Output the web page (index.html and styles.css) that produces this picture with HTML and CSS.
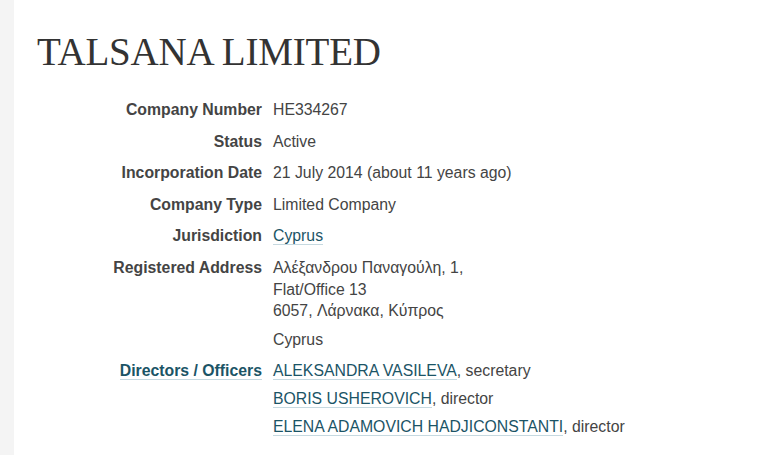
FILE: index.html
```html
<!DOCTYPE html>
<html lang="en">
<head>
<meta charset="utf-8">
<title>TALSANA LIMITED</title>
<link rel="stylesheet" href="styles.css">
</head>
<body>
<div class="page">
  <div class="rail"></div>
  <main class="content">
    <h1 class="title">TALSANA LIMITED</h1>
    <dl class="attrs">
      <dt>Company Number</dt>
      <dd>HE334267</dd>
      <dt>Status</dt>
      <dd>Active</dd>
      <dt>Incorporation Date</dt>
      <dd>21 July 2014 (about 11 years ago)</dd>
      <dt>Company Type</dt>
      <dd>Limited Company</dd>
      <dt>Jurisdiction</dt>
      <dd><a class="link" href="#">Cyprus</a></dd>
      <dt>Registered Address</dt>
      <dd>
        <div class="address">Αλέξανδρου Παναγούλη, 1,<br>Flat/Office 13<br>6057, Λάρνακα, Κύπρος</div>
        <div class="country">Cyprus</div>
      </dd>
      <dt><a class="link" href="#">Directors / Officers</a></dt>
      <dd>
        <ul class="officers">
          <li><a class="link" href="#">ALEKSANDRA VASILEVA</a>, secretary</li>
          <li><a class="link" href="#">BORIS USHEROVICH</a>, director</li>
          <li><a class="link" href="#">ELENA ADAMOVICH HADJICONSTANTI</a>, director</li>
        </ul>
      </dd>
    </dl>
  </main>
</div>
</body>
</html>
```
FILE: styles.css
```css
html, body {
  margin: 0;
  padding: 0;
  background: #ffffff;
}

body {
  font-family: "Liberation Sans", Arial, sans-serif;
  font-size: 15.8px;
  line-height: 21.6px;
  color: #444444;
}

.page {
  display: flex;
  min-height: 100vh;
}

.rail {
  width: 14px;
  flex: none;
  background: #f4f4f4;
}

.content {
  flex: 1;
}

.title {
  margin: 29px 0 0 23px;
  font-family: "Liberation Serif", "Times New Roman", serif;
  font-weight: normal;
  font-size: 39px;
  line-height: 45px;
  letter-spacing: -0.2px;
  color: #333333;
}

.attrs {
  display: grid;
  grid-template-columns: 248px 1fr;
  column-gap: 11px;
  margin: 25px 0 0 0;
}

.attrs dt {
  text-align: right;
  font-weight: bold;
  color: #444444;
  margin-bottom: 10px;
}

.attrs dd {
  margin: 0 0 10px 0;
  color: #444444;
}

.link {
  color: #1b5466;
  text-decoration: none;
  border-bottom: 1px solid #c6d9e0;
}

.country {
  margin-top: 7px;
}

.officers {
  list-style: none;
  margin: 0;
  padding: 0;
}

.officers li + li {
  margin-top: 6px;
}
```
